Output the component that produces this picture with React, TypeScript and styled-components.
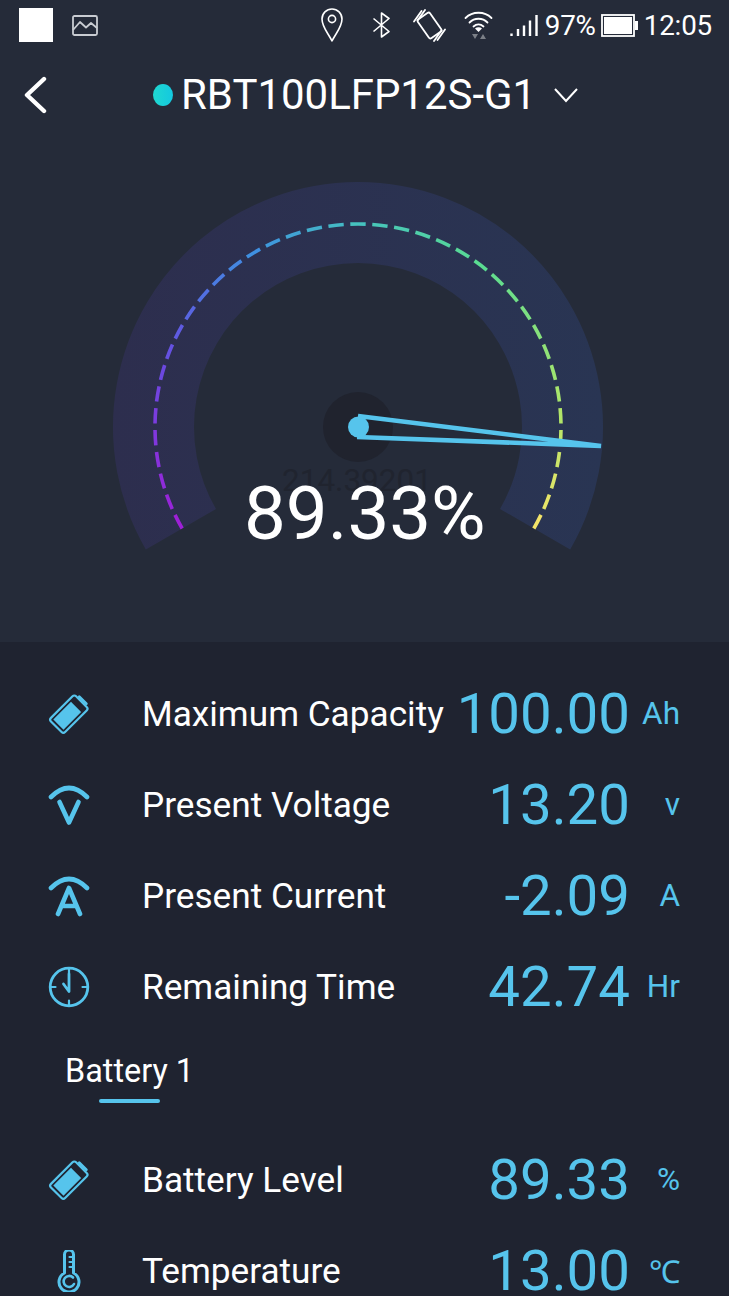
import styled, { createGlobalStyle } from 'styled-components'

const GlobalStyle = createGlobalStyle`
  html, body {
    margin: 0;
    padding: 0;
    background: #1f2330;
  }
  body {
    font-family: Roboto, "Liberation Sans", sans-serif;
  }
`

const Screen = styled.div`
  width: 729px;
  height: 1296px;
  overflow: hidden;
  background: #1f2330;
`

const Hero = styled.section`
  background: #252b39;
  height: 642px;
`

const StatusBar = styled.div`
  height: 50px;
  display: flex;
  align-items: center;
  padding: 0 17px 0 19px;
  color: #fff;
  box-sizing: border-box;
`

const NotifySquare = styled.div`
  width: 34px;
  height: 34px;
  background: #fff;
  margin-right: 19px;
`

const StatusIcons = styled.div`
  margin-left: auto;
  display: flex;
  align-items: center;
`

const StatusText = styled.span<{ $left: number }>`
  font-size: 27.8px;
  letter-spacing: -0.2px;
  margin-left: ${p => p.$left}px;
`

const StatusSvg = styled.svg<{ $left?: number }>`
  display: block;
  margin-left: ${p => p.$left || 0}px;
`

const Header = styled.header`
  height: 90px;
  display: flex;
  align-items: center;
  padding-left: 22px;
  color: #fff;
`

const BackButton = styled.svg`
  display: block;
  width: 26px;
  height: 38px;
  margin-right: 105px;
`

const StateDot = styled.span`
  width: 20px;
  height: 22px;
  border-radius: 50%;
  background: linear-gradient(90deg, #1fd8d0, #14c8e0);
  margin-right: 8px;
`

const Title = styled.h1`
  margin: 0;
  font-size: 41.95px;
  font-weight: 400;
  line-height: 1;
  white-space: nowrap;
`

const Caret = styled.svg`
  display: block;
  width: 26px;
  height: 16px;
  margin-left: 17px;
`

const GaugeWrap = styled.div`
  position: relative;
  width: 729px;
  height: 502px;
`

const GaugeSvg = styled.svg`
  display: block;
`

const Ghost = styled.div`
  position: absolute;
  left: 282px;
  top: 323px;
  font-size: 31.5px;
  line-height: 36px;
  color: #20242f;
`

const Percent = styled.div`
  position: absolute;
  left: 244px;
  top: 331px;
  font-size: 74.5px;
  line-height: 86px;
  color: #fff;
`

const Readings = styled.section`
  padding-top: 26px;
`

const RowWrap = styled.div`
  height: 91px;
  box-sizing: border-box;
  padding: 0 49px 0 0;
  display: grid;
  grid-template-columns: 142px 1fr auto 52px;
  align-items: center;
`

const IconCell = styled.div`
  display: flex;
  justify-content: flex-start;
  padding-left: 48px;
`

const RowIcon = styled.svg`
  display: block;
  width: 42px;
  height: 42px;
`

const Label = styled.div`
  font-size: 35.2px;
  color: #fff;
  white-space: nowrap;
`

const Value = styled.div`
  font-size: 56.4px;
  line-height: 64px;
  color: #56c4ec;
  text-align: right;
  margin-right: -2px;
`

const Unit = styled.div`
  font-size: 31.5px;
  color: #56c4ec;
  text-align: right;
`

const TabBar = styled.div`
  height: 102px;
  box-sizing: border-box;
  padding: 19px 0 0 65px;
`

const Tab = styled.div`
  display: inline-flex;
  flex-direction: column;
  align-items: center;
  font-size: 32.4px;
  line-height: 40px;
  color: #fff;
`

const TabLine = styled.div`
  width: 61px;
  height: 4px;
  border-radius: 2px;
  background: #56c4ec;
  margin-top: 8px;
`

const BatteryIcon = () => (
  <RowIcon viewBox="0 0 42 42">
    <g transform="rotate(45 21 21)" fill="none" stroke="#56c4ec">
      <rect x="11" y="3.5" width="20" height="35.5" rx="2.5" strokeWidth="2.2" />
      <rect x="13.8" y="11" width="14.4" height="25" fill="#56c4ec" stroke="none" />
      <path d="M16 1.5h10" strokeWidth="2.8" strokeLinecap="round" />
    </g>
  </RowIcon>
)

const VoltIcon = () => (
  <RowIcon viewBox="0 0 42 42">
    <g fill="none" stroke="#56c4ec" strokeWidth="4.6" strokeLinecap="round" strokeLinejoin="round">
      <path d="M3 13Q21 -5 39 13" />
      <path d="M11.5 18L21 38.5L30.5 18" />
    </g>
  </RowIcon>
)

const AmpIcon = () => (
  <RowIcon viewBox="0 0 42 42">
    <g fill="none" stroke="#56c4ec" strokeWidth="4.6" strokeLinecap="round" strokeLinejoin="round">
      <path d="M3 13Q21 -5 39 13" />
      <path d="M10 39L21 13L32 39M14 31H28" />
    </g>
  </RowIcon>
)

const ClockIcon = () => (
  <RowIcon viewBox="0 0 42 42">
    <g fill="none" stroke="#56c4ec" strokeLinecap="round" strokeLinejoin="round">
      <circle cx="21" cy="21" r="18.8" strokeWidth="2.8" />
      <path d="M21 2.5v5M21 34.5v5M2.5 21h5M34.5 21h5" strokeWidth="2.2" />
      <path d="M21 8v17.5L15.5 18" strokeWidth="2.8" />
    </g>
  </RowIcon>
)

const ThermoIcon = () => (
  <RowIcon viewBox="0 0 42 42">
    <g fill="none" stroke="#56c4ec" strokeLinecap="round" strokeLinejoin="round">
      <path d="M16.5 23V4.5a4.5 4.5 0 0 1 9 0V23a10 10 0 1 1-9 0Z" strokeWidth="3" />
      <path d="M21.5 7h4M21.5 12h4M21.5 17h4" strokeWidth="2.2" />
      <path d="M25 27.5a5.5 5.5 0 1 0 1 6.5" strokeWidth="2.6" />
    </g>
  </RowIcon>
)

const Row = ({ icon, label, value, unit }: { icon: React.ReactNode; label: string; value: string; unit: string }) => (
  <RowWrap>
    <IconCell>{icon}</IconCell>
    <Label>{label}</Label>
    <Value>{value}</Value>
    <Unit>{unit}</Unit>
  </RowWrap>
)

const stops: [number, number[]][] = [
  [0, [160, 30, 215]],
  [0.2, [105, 75, 225]],
  [0.37, [62, 145, 225]],
  [0.5, [70, 195, 190]],
  [0.65, [90, 220, 145]],
  [0.85, [175, 230, 105]],
  [1, [252, 228, 105]],
]

const colorAt = (t: number) => {
  for (let i = 1; i < stops.length; i++) {
    if (t <= stops[i][0]) {
      const [t0, c0] = stops[i - 1]
      const [t1, c1] = stops[i]
      const k = (t - t0) / (t1 - t0)
      return `rgb(${c0.map((v, n) => Math.round(v + (c1[n] - v) * k)).join(',')})`
    }
  }
  return 'rgb(252,228,105)'
}

const CX = 358
const CY = 427

// angle is degrees clockwise from the lower-left end of the dial
const polar = (deg: number, r: number) => {
  const a = ((150 + deg) * Math.PI) / 180
  return [CX + r * Math.cos(a), CY + r * Math.sin(a)]
}

const arcPath = (from: number, to: number, r: number) => {
  const [x0, y0] = polar(from, r)
  const [x1, y1] = polar(to, r)
  return `M${x0.toFixed(2)} ${y0.toFixed(2)}A${r} ${r} 0 ${to - from > 180 ? 1 : 0} 1 ${x1.toFixed(2)} ${y1.toFixed(2)}`
}

const DASHES = 39
const dashes = Array.from({ length: DASHES }, (_, i) => {
  const pitch = 240 / (DASHES - 0.3)
  const from = i * pitch
  return { from, to: Math.min(from + pitch * 0.7, 240), color: colorAt((i + 0.35) / DASHES) }
})

const Gauge = () => (
  <GaugeSvg width="729" height="502" viewBox="0 140 729 502">
    <defs>
      <linearGradient id="band" x1="113" x2="603" y1="0" y2="0" gradientUnits="userSpaceOnUse">
        <stop offset="0" stopColor="#2d2e4e" />
        <stop offset="1" stopColor="#293553" />
      </linearGradient>
    </defs>
    <path d={arcPath(0, 240, 204.5)} fill="none" stroke="url(#band)" strokeWidth="81" />
    {dashes.map((d, i) => (
      <path key={i} d={arcPath(d.from, d.to, 203)} fill="none" stroke={d.color} strokeWidth="3.6" />
    ))}
    <circle cx={CX} cy={CY} r="35" fill="#20232e" />
    <path d="M358 416L601 446L357 437" fill="none" stroke="#56c4ec" strokeWidth="4.6" strokeLinejoin="miter" />
    <circle cx="358.5" cy="427" r="10.5" fill="#56c4ec" />
  </GaugeSvg>
)

export default function App() {
  return (
    <Screen>
      <GlobalStyle />
      <Hero>
        <StatusBar>
          <NotifySquare />
          <StatusSvg width="26" height="21" viewBox="0 0 26 21">
            <g fill="none" stroke="#c9ccd2" strokeWidth="1.8" strokeLinejoin="round">
              <rect x="1" y="1" width="24" height="19" rx="1.5" />
              <path d="M1 15L8 7L14 12.5L19 8L25 13" />
            </g>
          </StatusSvg>
          <StatusIcons>
            <StatusSvg width="22" height="34" viewBox="0 0 22 34">
              <g fill="none" stroke="#fff" strokeWidth="1.6">
                <path d="M11 33C7 25 1 19 1 11a10 10 0 0 1 20 0C21 19 15 25 11 33Z" strokeLinejoin="round" />
                <circle cx="11" cy="11" r="3.6" />
              </g>
            </StatusSvg>
            <StatusSvg $left={29} width="19" height="26" viewBox="0 0 19 26">
              <path d="M1.5 6.5L17 19.5L9.5 25V1L17 6.5L1.5 19.5" fill="none" stroke="#fff" strokeWidth="1.6" strokeLinejoin="round" />
            </StatusSvg>
            <StatusSvg $left={22} width="33" height="33" viewBox="0 0 33 33">
              <g fill="none" stroke="#fff" strokeWidth="1.8" strokeLinecap="round">
                <rect x="9" y="5" width="15" height="23" rx="2" transform="rotate(-35 16.5 16.5)" />
                <path d="M8.5 2L1 12.5M12 1L4.5 11.5M24.5 31L32 20.5M21 32L28.5 21.5" />
              </g>
            </StatusSvg>
            <StatusSvg $left={18} width="29" height="30" viewBox="0 0 29 30">
              <g fill="none" stroke="#fff" strokeWidth="1.8" strokeLinecap="round">
                <path d="M1.5 8C8.5 1 20.5 1 27.5 8M5.5 12.5C10.5 7.5 18.5 7.5 23.5 12.5M9.5 16.5C12.5 13.8 16.5 13.8 19.5 16.5" />
              </g>
              <path d="M11 18.5C13 16.8 16 16.8 18 18.5L14.5 22Z" fill="#fff" />
              <path d="M8 24H14L11 29ZM16 29H22L19 24Z" fill="#7b7f87" />
            </StatusSvg>
            <StatusSvg $left={17} width="28" height="23" viewBox="0 0 28 23">
              <path d="M1.5 19.5v2.5M8 15v7M14 11.5v10.5M20 6.5v15.5M26.5 1v21" fill="none" stroke="#fff" strokeWidth="2.4" />
            </StatusSvg>
            <StatusText $left={7}>97%</StatusText>
            <StatusSvg $left={5} width="37" height="23" viewBox="0 0 37 23">
              <rect x="1" y="1" width="32" height="21" fill="none" stroke="#fff" strokeWidth="1.8" />
              <rect x="3" y="3" width="28" height="17" fill="#fff" />
              <rect x="34" y="7" width="3" height="9" fill="#fff" />
            </StatusSvg>
            <StatusText $left={6}>12:05</StatusText>
          </StatusIcons>
        </StatusBar>
        <Header>
          <BackButton viewBox="0 0 26 38">
            <path d="M22 3L5 19L22 35" fill="none" stroke="#fff" strokeWidth="4.4" strokeLinecap="round" strokeLinejoin="round" />
          </BackButton>
          <StateDot />
          <Title>RBT100LFP12S-G1</Title>
          <Caret viewBox="0 0 26 16">
            <path d="M2 2L13 14L24 2" fill="none" stroke="#fff" strokeWidth="2" />
          </Caret>
        </Header>
        <GaugeWrap>
          <Gauge />
          <Ghost>214.39201</Ghost>
          <Percent>89.33%</Percent>
        </GaugeWrap>
      </Hero>
      <Readings>
        <Row icon={<BatteryIcon />} label="Maximum Capacity" value="100.00" unit="Ah" />
        <Row icon={<VoltIcon />} label="Present Voltage" value="13.20" unit="v" />
        <Row icon={<AmpIcon />} label="Present Current" value="-2.09" unit="A" />
        <Row icon={<ClockIcon />} label="Remaining Time" value="42.74" unit="Hr" />
        <TabBar>
          <Tab>
            Battery 1
            <TabLine />
          </Tab>
        </TabBar>
        <Row icon={<BatteryIcon />} label="Battery Level" value="89.33" unit="%" />
        <Row icon={<ThermoIcon />} label="Temperature" value="13.00" unit="℃" />
      </Readings>
    </Screen>
  )
}
